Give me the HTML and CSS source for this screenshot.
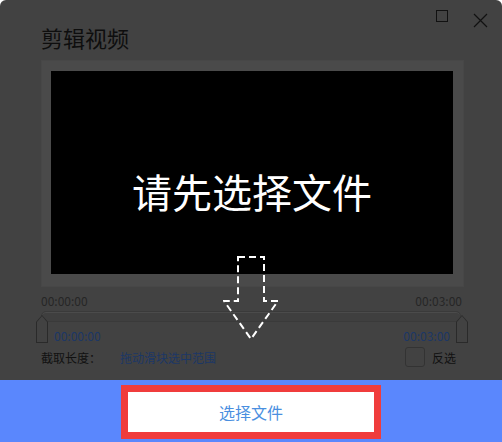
FILE: index.html
```html
<!DOCTYPE html>
<html lang="zh-CN">
<head>
    <meta charset="UTF-8">
    <title>剪辑视频</title>
    <link rel="stylesheet" href="styles.css">
</head>
<body>
    <div class="dialog">
        <div class="titlebar">
            <span class="win-btn max"></span>
            <span class="win-btn close">
                <svg width="15" height="15" viewBox="0 0 15 15"><path d="M1 1L14 14M14 1L1 14" stroke="#111" stroke-width="1.2"/></svg>
            </span>
        </div>
        <div class="content">
            <h1>剪辑视频</h1>
            <div class="player">
                <div class="screen">请先选择文件</div>
            </div>
            <svg class="hint-arrow" width="60" height="86" viewBox="0 0 60 86">
                <path d="M15 1H41V45H55L28 83L1 45H15Z" fill="none" stroke="#fff" stroke-width="2" stroke-dasharray="7 4"/>
            </svg>
            <div class="times">
                <span>00:00:00</span>
                <span>00:03:00</span>
            </div>
            <div class="track"></div>
            <div class="handles">
                <span class="handle"></span>
                <span class="time-blue">00:00:00</span>
                <span class="spacer"></span>
                <span class="time-blue">00:03:00</span>
                <span class="handle"></span>
            </div>
            <div class="range-row">
                <span class="label">截取长度：</span>
                <span class="range-hint">拖动滑块选中范围</span>
                <span class="spacer"></span>
                <span class="checkbox"></span>
                <span class="label">反选</span>
            </div>
        </div>
        <div class="footer">
            <button class="pick-btn">选择文件</button>
        </div>
    </div>
</body>
</html>
```

FILE: styles.css
```css
body { margin: 0; background-color: #fff; font-family: "Noto Sans CJK SC", "Liberation Sans", sans-serif; }
.dialog {
    width: 502px;
    height: 442px;
    background-color: #424242;
    border-radius: 6px 6px 0 0;
    display: flex;
    flex-direction: column;
    overflow: hidden;
}
.titlebar { height: 0; position: relative; }
.win-btn { position: absolute; }
.win-btn.max { left: 436px; top: 10px; width: 10px; height: 10px; border: 1px solid #111; }
.win-btn.close { left: 473px; top: 9px; width: 15px; height: 15px; }

.content { flex: 1; padding: 22px 40px 0 41px; position: relative; }
h1 { margin: 0; font-size: 22px; font-weight: normal; color: #0e0e0e; line-height: 30px; }
.player {
    margin-top: 8px;
    width: 402px;
    padding: 10px 10px 12px 9px;
    background-color: #4a4a4a;
    border: 1px solid #474747;
}
.screen {
    height: 203px;
    box-sizing: border-box;
    padding-top: 36px;
    background-color: #000;
    color: #fff;
    font-size: 40px;
    display: flex;
    align-items: center;
    justify-content: center;
}
.hint-arrow { position: absolute; left: 223px; top: 256px; }

.times { display: flex; justify-content: space-between; margin-top: 7px; font-size: 12px; color: #262626; line-height: 14px; }
.track {
    margin-top: 3px;
    width: 418px;
    height: 9px;
    border: 1px solid #3a3a3a;
    border-radius: 5px;
    background-color: #3f3f3f;
    box-shadow: inset 0 1px 0 #4b4b4b;
}
.handles { display: flex; align-items: flex-start; margin-left: -5px; margin-right: -6px; margin-top: -7px; }
.handle {
    width: 10px;
    height: 20px;
    border: 1px solid #2a2a2a;
    border-top: none;
    margin-top: 7px;
    position: relative;
}
.handle::before {
    content: "";
    position: absolute;
    left: -1px;
    top: -7px;
    width: 0;
    height: 0;
    border-left: 6px solid transparent;
    border-right: 6px solid transparent;
    border-bottom: 7px solid #2a2a2a;
}
.handle::after {
    content: "";
    position: absolute;
    left: 0;
    top: -6px;
    border-left: 5px solid transparent;
    border-right: 5px solid transparent;
    border-bottom: 6px solid #424242;
}
.time-blue { font-size: 12px; color: #1c3766; margin: 0 6px; padding-top: 12px; }
.spacer { flex: 1; }
.range-row { display: flex; align-items: center; margin-top: 2px; margin-right: 6px; font-size: 12px; height: 22px; }
.label { color: #111; }
.range-hint { color: #1c3766; margin-left: 19px; }
.checkbox { width: 18px; height: 18px; border: 1px solid #333; border-radius: 3px; margin-right: 7px; }

.footer {
    height: 62px;
    background-color: #5a87fd;
    display: flex;
    justify-content: center;
    align-items: center;
    padding-top: 2px;
    box-sizing: border-box;
}
.pick-btn {
    width: 260px;
    height: 54px;
    border: 7px solid #f03c3c;
    background-color: #fff;
    color: #4a8fe0;
    font-size: 16px;
    font-family: inherit;
}
```
